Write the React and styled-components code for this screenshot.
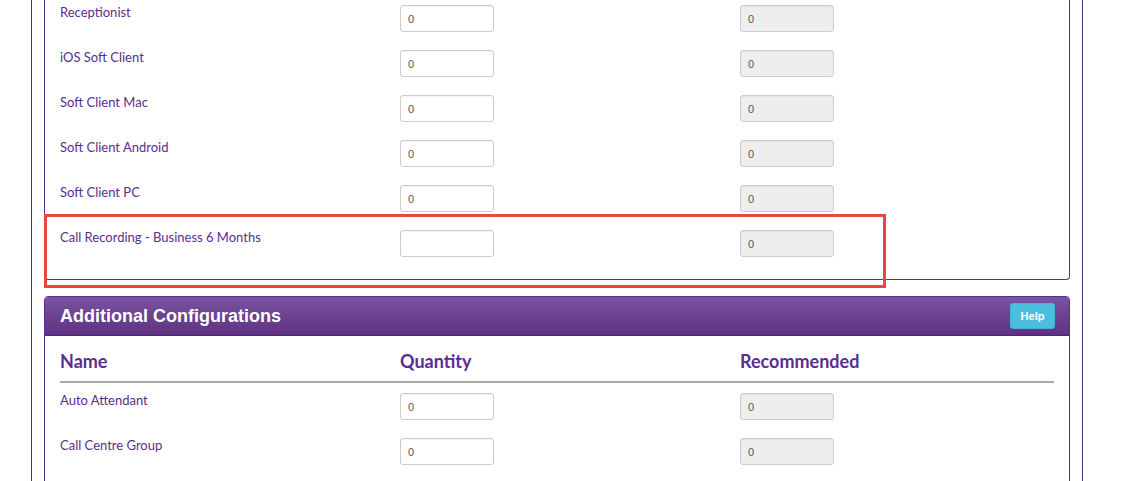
import React from "react";
import styled, { createGlobalStyle } from "styled-components";

const GlobalStyle = createGlobalStyle`
  html, body {
    margin: 0;
    padding: 0;
    background: #fff;
    overflow: hidden;
  }
  body {
    font-family: "Lato", "Liberation Sans", sans-serif;
  }
`;

const purple = "#5b2d90";

const Page = styled.div`
  margin-left: 31px;
  width: 1026px;
  min-height: 100vh;
  padding: 0 12px;
  border-left: 1px solid ${purple};
  border-right: 1px solid ${purple};
`;

const Panel = styled.section`
  border: 1px solid ${purple};
  border-top: ${(p) => (p.$cut ? "none" : `1px solid ${purple}`)};
  border-radius: ${(p) => (p.$cut ? "0 0 4px 4px" : "4px")};
  margin-bottom: 16px;
  background: #fff;
`;

const PanelHeader = styled.header`
  display: flex;
  align-items: center;
  justify-content: space-between;
  height: 38px;
  padding: 0 14px 0 15px;
  background: linear-gradient(to bottom, #7b53a0 0%, #5d3282 100%);
  border-bottom: 1px solid #4a2283;
  border-radius: 3px 3px 0 0;
`;

const PanelTitle = styled.h2`
  margin: 0;
  font-family: "Liberation Sans", Arial, sans-serif;
  font-size: 18px;
  font-weight: bold;
  color: #fff;
`;

const HelpButton = styled.button`
  width: 45px;
  height: 26px;
  padding: 0;
  border: 1px solid #3fb2d6;
  border-radius: 3px;
  background: #4cbddf;
  color: #fff;
  font-family: "Liberation Sans", Arial, sans-serif;
  font-size: 11px;
  font-weight: bold;
`;

const PanelBody = styled.div`
  padding: ${(p) => p.$pad || "3px 15px 6px"};
`;

const Grid = styled.div`
  display: grid;
  grid-template-columns: 340px 340px 1fr;
`;

const HeadRow = styled(Grid)`
  height: 45px;
  align-items: end;
  border-bottom: 2px solid #a9a9a9;
  margin-bottom: 8px;
`;

const HeadCell = styled.div`
  color: ${purple};
  font-size: 18px;
  font-weight: bold;
  line-height: 24px;
  padding-bottom: 8px;
`;

const Row = styled(Grid)`
  position: relative;
  height: 45px;
  align-items: start;
`;

const Label = styled.div`
  color: ${purple};
  font-size: 13px;
  line-height: 18px;
`;

const QtyInput = styled.input`
  box-sizing: border-box;
  width: 94px;
  height: 27px;
  margin-top: 2px;
  padding: 0 7px;
  border: 1px solid #ccc;
  border-radius: 3px;
  background: ${(p) => (p.readOnly ? "#eee" : "#fff")};
  color: #555;
  font-family: "Liberation Sans", Arial, sans-serif;
  font-size: 11px;
  box-shadow: inset 0 1px 1px rgba(0, 0, 0, 0.05);
`;

const Highlight = styled.div`
  position: absolute;
  left: -16px;
  top: -14px;
  width: 842px;
  height: 74px;
  box-sizing: border-box;
  border: 3px solid #e8473f;
  pointer-events: none;
`;

const ItemRow = ({ name, qty = "0", rec = "0", highlight }) => (
  <Row>
    <Label>{name}</Label>
    <div>
      <QtyInput defaultValue={qty} />
    </div>
    <div>
      <QtyInput readOnly value={rec} />
    </div>
    {highlight && <Highlight />}
  </Row>
);

const licences = [
  "Receptionist",
  "iOS Soft Client",
  "Soft Client Mac",
  "Soft Client Android",
  "Soft Client PC",
];

const extras = ["Auto Attendant", "Call Centre Group"];

export default function App() {
  return (
    <>
      <GlobalStyle />
      <Page>
        <Panel $cut>
          <PanelBody>
            {licences.map((n) => (
              <ItemRow key={n} name={n} />
            ))}
            <ItemRow name="Call Recording - Business 6 Months" qty="" highlight />
          </PanelBody>
        </Panel>
        <Panel>
          <PanelHeader>
            <PanelTitle>Additional Configurations</PanelTitle>
            <HelpButton>Help</HelpButton>
          </PanelHeader>
          <PanelBody $pad="0 15px 4px">
            <HeadRow>
              <HeadCell>Name</HeadCell>
              <HeadCell>Quantity</HeadCell>
              <HeadCell>Recommended</HeadCell>
            </HeadRow>
            {extras.map((n) => (
              <ItemRow key={n} name={n} />
            ))}
          </PanelBody>
        </Panel>
      </Page>
    </>
  );
}
